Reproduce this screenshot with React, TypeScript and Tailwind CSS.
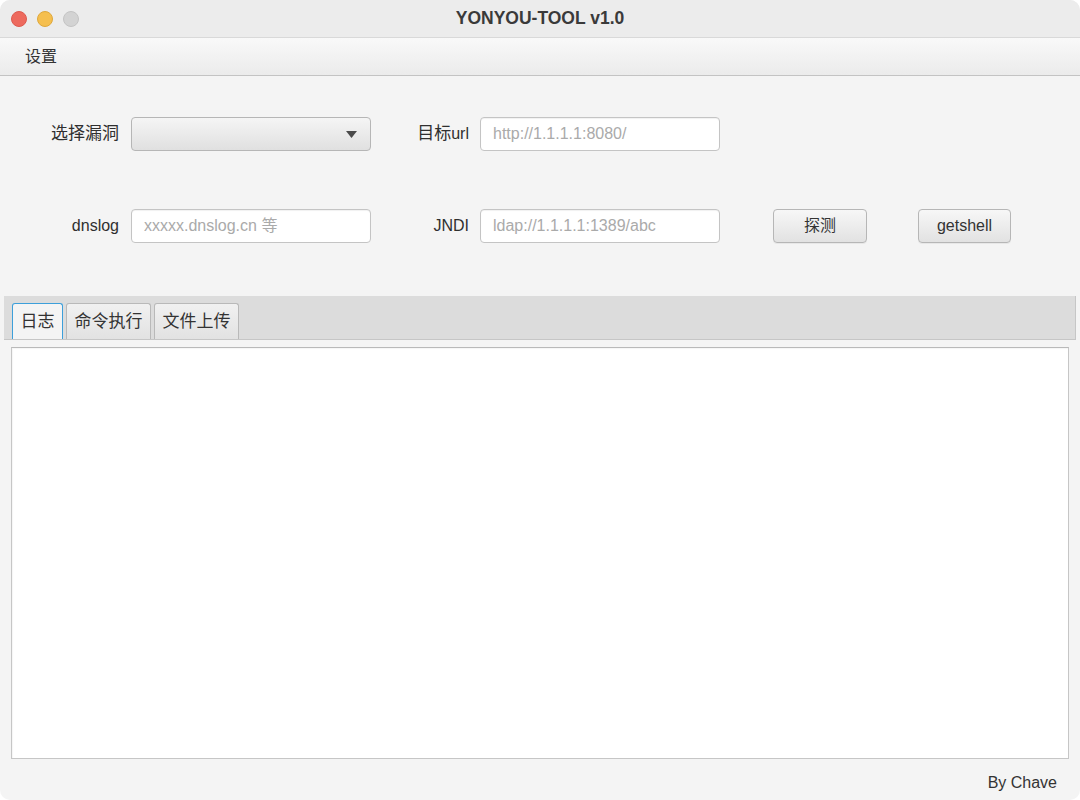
import { useState } from 'react'

const font = { fontFamily: '"Liberation Sans", "Noto Sans CJK SC", sans-serif' }

const tabs = [
  { label: '日志', width: 'w-[51px]' },
  { label: '命令执行', width: 'w-[85px]' },
  { label: '文件上传', width: 'w-[85px]' },
]

function TextField({ placeholder }: { placeholder: string }) {
  return (
    <input
      type="text"
      placeholder={placeholder}
      className="h-[34px] w-[240px] rounded-[4px] border border-[#c4c4c4] bg-white px-[12px] text-[16px] text-[#333] shadow-[inset_0_1px_1px_rgba(0,0,0,0.06)] outline-none placeholder:text-[#aaaaaa]"
    />
  )
}

function Button({ children, width }: { children: React.ReactNode; width: string }) {
  return (
    <button
      type="button"
      className={`flex h-[34px] ${width} items-center justify-center rounded-[4px] border border-[#b6b6b6] bg-gradient-to-b from-[#f7f7f7] to-[#e2e2e2] text-[16px] text-[#333] shadow-[0_1px_0_rgba(0,0,0,0.05)]`}
    >
      {children}
    </button>
  )
}

export default function App() {
  const [active, setActive] = useState(0)

  return (
    <div style={font} className="flex h-[800px] w-[1080px] flex-col overflow-hidden rounded-[10px] bg-[#f4f4f4] text-[#2f2f2f]">
      {/* title bar */}
      <div className="grid h-[38px] grid-cols-[1fr_auto_1fr] items-center border-b border-[#d9d9d9] bg-[#ececec]">
        <div className="flex items-center gap-[10px] pl-[11px]">
          <span className="h-[16px] w-[16px] rounded-full border border-[#de5a4f] bg-[#ed6a5e]" />
          <span className="h-[16px] w-[16px] rounded-full border border-[#dfa83c] bg-[#f5bf4f]" />
          <span className="h-[16px] w-[16px] rounded-full border border-[#c4c4c4] bg-[#d3d3d3]" />
        </div>
        <div className="text-[17.5px] font-bold text-[#3a3a3a]">YONYOU-TOOL v1.0</div>
        <div />
      </div>

      {/* menu bar */}
      <div className="flex h-[38px] items-center border-b border-[#c3c3c3] bg-gradient-to-b from-[#f9f9f9] to-[#ebebeb] pl-[25px]">
        <span className="text-[16px] text-[#333]">设置</span>
      </div>

      {/* form */}
      <div className="pt-[41px]">
        <div className="flex h-[34px] items-center">
          <span className="w-[119px] text-right text-[17px]">选择漏洞</span>
          <div className="ml-[12px] flex h-[34px] w-[240px] items-center justify-end rounded-[4px] border border-[#b6b6b6] bg-gradient-to-b from-[#f5f5f5] to-[#e0e0e0] pr-[13px]">
            <svg width="11" height="7" viewBox="0 0 11 7">
              <path d="M0 0 H11 L5.5 7 Z" fill="#4a4a4a" />
            </svg>
          </div>
          <span className="w-[98px] text-right">
            <span className="text-[17px]">目标</span>
            <span className="text-[16px]">url</span>
          </span>
          <div className="ml-[11px]">
            <TextField placeholder="http://1.1.1.1:8080/" />
          </div>
        </div>

        <div className="mt-[58px] flex h-[34px] items-center">
          <span className="w-[119px] text-right text-[16px]">dnslog</span>
          <div className="ml-[12px]">
            <TextField placeholder="xxxxx.dnslog.cn 等" />
          </div>
          <span className="w-[98px] text-right text-[16px]">JNDI</span>
          <div className="ml-[11px]">
            <TextField placeholder="ldap://1.1.1.1:1389/abc" />
          </div>
          <div className="ml-[53px]">
            <Button width="w-[94px]">探测</Button>
          </div>
          <div className="ml-[51px]">
            <Button width="w-[93px]">getshell</Button>
          </div>
        </div>
      </div>

      {/* tab pane */}
      <div className="mx-[4px] mt-[53px] flex flex-1 flex-col">
        <div className="flex h-[44px] items-end gap-[3px] border-r border-b border-[#c6c6c6] bg-[#dcdcdc] pl-[8px]">
          {tabs.map((t, i) => (
            <button
              key={t.label}
              type="button"
              onClick={() => setActive(i)}
              className={
                i === active
                  ? `flex h-[36px] ${t.width} items-center justify-center rounded-t-[3px] border border-b-0 border-[#3d9fda] bg-[#f4f4f4] text-[17px] text-[#333]`
                  : `flex h-[36px] ${t.width} items-center justify-center rounded-t-[3px] border border-b-0 border-[#b9b9b9] bg-gradient-to-b from-[#f1f1f1] to-[#e2e2e2] text-[17px] text-[#333]`
              }
            >
              {t.label}
            </button>
          ))}
        </div>
        <div className="flex flex-1 p-[7px]">
          <div className="flex-1 border border-[#c6c6c6] border-t-[#b9b9b9] bg-white shadow-[inset_1px_1px_1px_rgba(0,0,0,0.04)]" />
        </div>
      </div>

      {/* footer */}
      <div className="flex h-[34px] items-center justify-end pr-[23px]">
        <span className="text-[16px] text-[#333]">By Chave</span>
      </div>
    </div>
  )
}
